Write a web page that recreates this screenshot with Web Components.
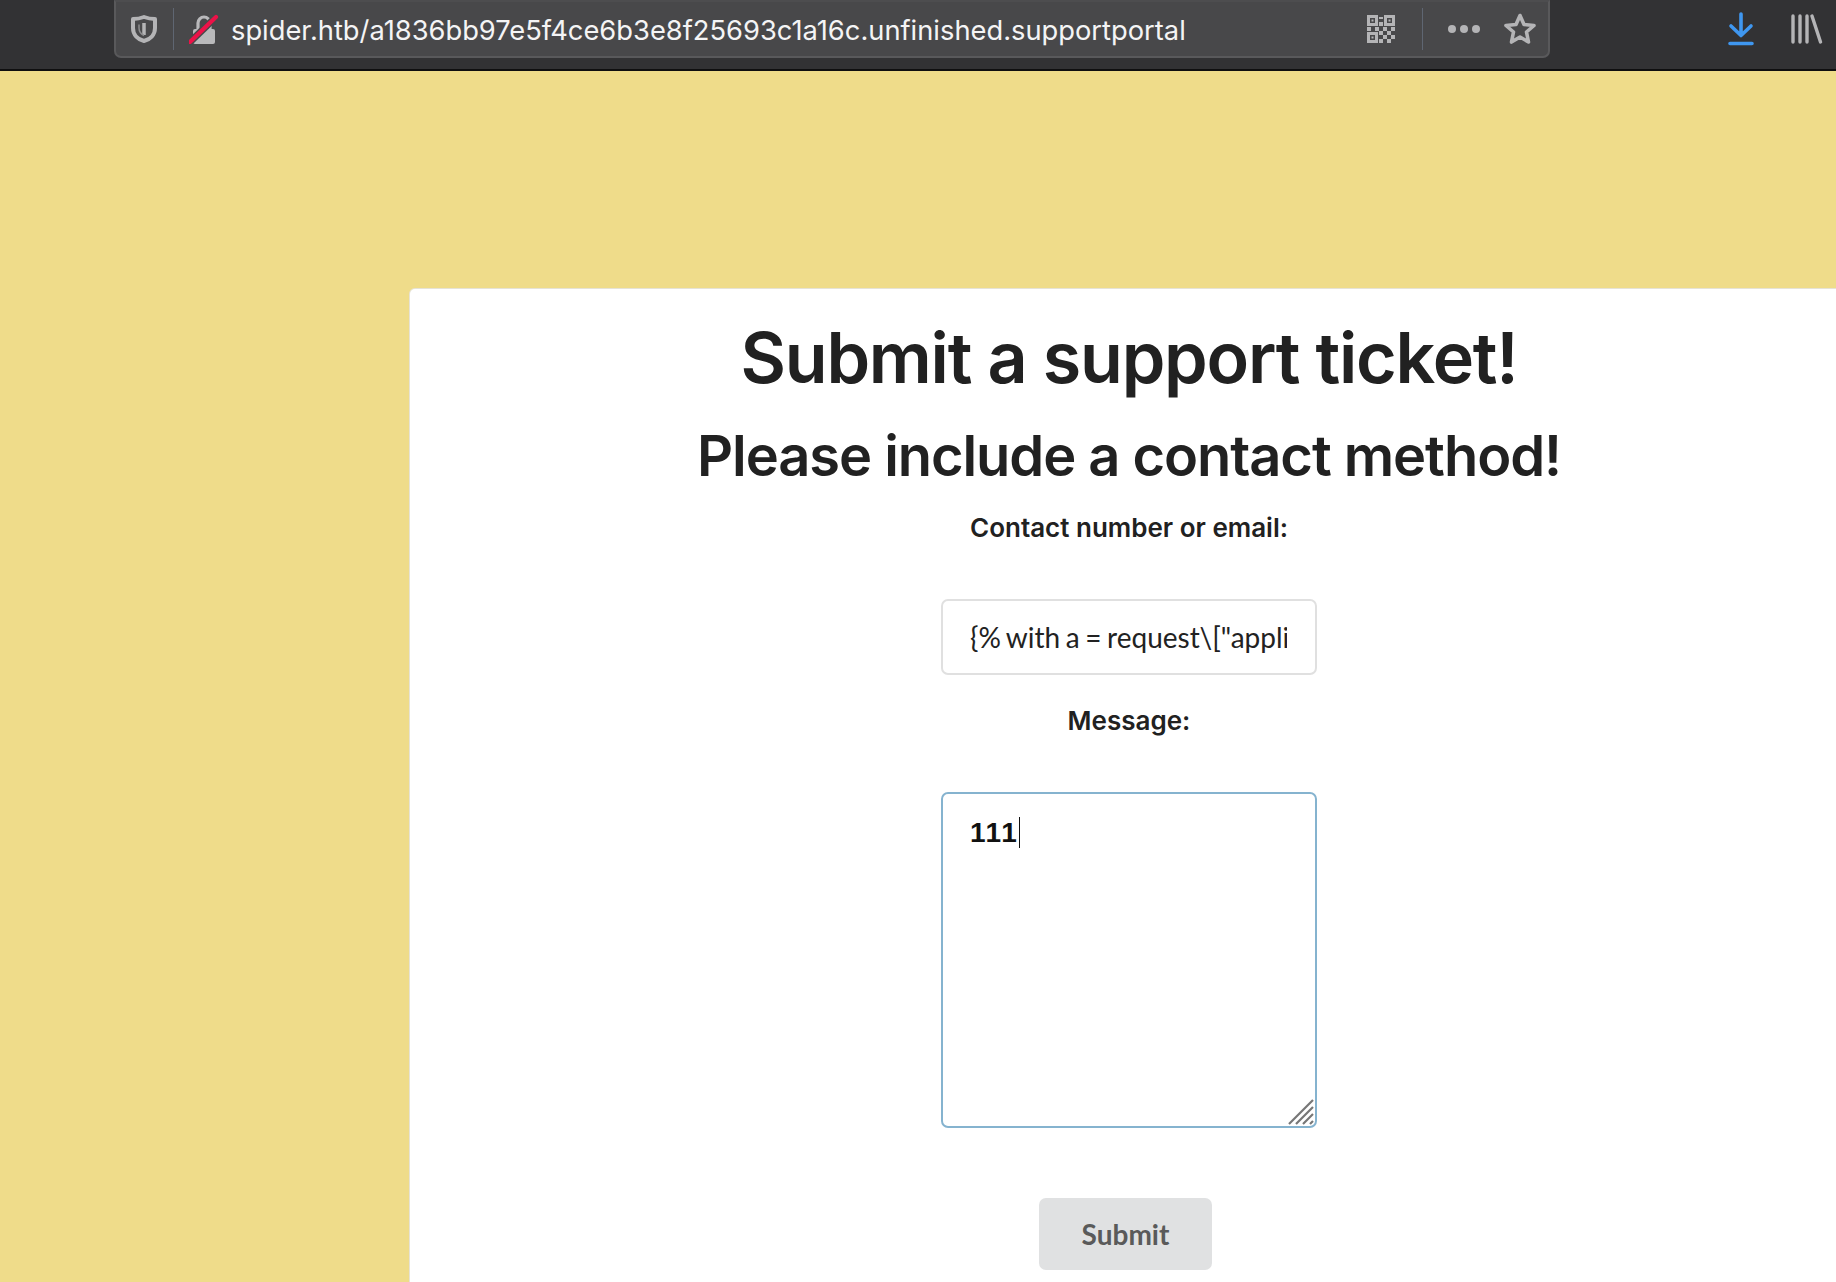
<!DOCTYPE html>
<html>
<head>
<meta charset="utf-8">
<title>Support portal</title>
<style>
  html, body { margin: 0; height: 100%; overflow: hidden; background: #efdc8a; }
</style>
</head>
<body>
<browser-toolbar url="spider.htb/a1836bb97e5f4ce6b3e8f25693c1a16c.unfinished.supportportal"></browser-toolbar>
<ticket-page>
  <ticket-card>
    <h-title level="1">Submit a support ticket!</h-title>
    <h-title level="2">Please include a contact method!</h-title>
    <form-label>Contact number or email:</form-label>
    <text-field>{% with a = request\["application"\]\["\x5f\x5fglobals\x5f\x5f"\] %}</text-field>
    <form-label class="second">Message:</form-label>
    <message-box>111</message-box>
    <submit-button>Submit</submit-button>
  </ticket-card>
</ticket-page>
<script>
class BrowserToolbar extends HTMLElement {
  constructor() {
    super()
    this.attachShadow({ mode: "open" })
  }
  connectedCallback() {
    this.shadowRoot.innerHTML = /*html */`
      <style>
        :host { display: flex; height: 69px; background: #323234; border-bottom: 2px solid #0f0f10; padding-left: 114px; font-family: Inter, "Liberation Sans", sans-serif; }
        .bar { display: flex; align-items: center; width: 1436px; height: 58px; box-sizing: border-box; background: #48484a; border: 2px solid #59595b; border-top-color: #4d4d4f; border-radius: 0 0 7px 7px; color: #f4f4f5; }
        svg { display: block; flex: none; }
        .sep { flex: none; width: 1px; height: 42px; background: #5f6672; }
        .url { flex: none; width: 1130px; margin-left: 12px; padding-top: 2px; font-size: 27.3px; white-space: nowrap; }
        .right { display: flex; align-items: center; margin-left: auto; }
      </style>
      <div class="bar">
        <svg style="margin-left:15px" width="26" height="28" viewBox="0 0 26 28"><path d="M13 2 C9 3.500 6 4 2 4 V13 C2 20 7 24.500 13 26 C19 24.500 24 20 24 13 V4 C20 4 17 3.500 13 2Z" fill="none" stroke="#b4b4b6" stroke-width="4" stroke-linejoin="round"/><path d="M13 8 V20" stroke="#b4b4b6" stroke-width="3.500"/><path d="M8 9.500 V13 C8 16.500 10 19 13 20.500" fill="none" stroke="#8d8d8f" stroke-width="1.500"/></svg>
        <div class="sep" style="margin-left:16px"></div>
        <svg style="margin-left:15px" width="30" height="30" viewBox="0 0 30 30">
          <path d="M9 16 V9 a6 6 0 0 1 12 0 V16" fill="none" stroke="#b9b9bb" stroke-width="3.200"/>
          <rect x="4" y="15" width="22" height="15" rx="2" fill="#b9b9bb"/>
          <path d="M1 28 L27 3" stroke="#48484a" stroke-width="7"/>
          <path d="M1 28 L27 3" stroke="#ec1248" stroke-width="4.200" stroke-linecap="round"/>
        </svg>
        <div class="url">${this.getAttribute("url")}</div>
        <div class="right">
          <svg width="30" height="30" viewBox="0 0 30 30" fill="#b4b4b6">
            <path fill-rule="evenodd" d="M1 1h11v11H1z M4 4v5h5V4z M18 1h11v11H18z M21 4v5h5V4z M1 18h11v11H1z M4 21v5h5v-5z"/>
            <rect x="5.500" y="5.500" width="2" height="2"/><rect x="22.500" y="5.500" width="2" height="2"/><rect x="5.500" y="22.500" width="2" height="2"/>
            <path d="M13 3h4v2h-4z M13 8h4v4h-4z M1 13h4v4H1z M9 13h4v4H9z M17 13h4v4h-4z M25 13h4v4h-4z M13 17h4v4h-4z M21 17h4v4h-4z M17 21h4v4h-4z M25 21h4v4h-4z M13 25h4v4h-4z M21 25h4v4h-4z"/>
          </svg>
          <div class="sep" style="margin-left:26px"></div>
          <svg style="margin-left:24px" width="34" height="10" viewBox="0 0 34 10" fill="#b4b4b6"><circle cx="5" cy="5" r="4"/><circle cx="17" cy="5" r="4"/><circle cx="29" cy="5" r="4"/></svg>
          <svg style="margin-left:22px;margin-right:11px" width="34" height="34" viewBox="0 0 34 34"><path d="M17 3.500 L21 12.500 L31 13.500 L23.500 20 L25.500 30 L17 25 L8.500 30 L10.500 20 L3 13.500 L13 12.500Z" fill="none" stroke="#b4b4b6" stroke-width="3.600" stroke-linejoin="round"/></svg>
        </div>
      </div>
      <svg style="margin-left:177px;margin-top:12px" width="28" height="34" viewBox="0 0 28 34" fill="none" stroke="#3f97f0" stroke-width="3.600" stroke-linecap="round" stroke-linejoin="round"><path d="M14 2 V23 M4 14 L14 23.500 L24 14 M3 31.500 H25"/></svg>
      <svg style="margin-left:36px;margin-top:14px" width="32" height="30" viewBox="0 0 32 30" fill="none" stroke="#b4b4b6" stroke-width="3.400" stroke-linecap="round"><path d="M2 2 V28 M9 2 V28 M16 2 V28 M21 2 L29.500 28"/></svg>
    `
  }
}

class TicketPage extends HTMLElement {
  constructor() {
    super()
    this.attachShadow({ mode: "open" })
    this.shadowRoot.innerHTML = /*html */`
      <style>
        :host { display: block; height: 1211px; padding: 218px 0 0 410px; box-sizing: border-box; overflow: hidden; background: #efdc8a; }
      </style>
      <slot></slot>
    `
  }
}

class TicketCard extends HTMLElement {
  constructor() {
    super()
    this.attachShadow({ mode: "open" })
    this.shadowRoot.innerHTML = /*html */`
      <style>
        :host { display: flex; flex-direction: column; align-items: center; width: 1438px; height: 1100px; box-sizing: border-box; padding-top: 22px; background: #fff; border-radius: 5px 0 0 0; box-shadow: 0 0 0 1px #e6e3d6; color: #212121; font-family: Inter, "Liberation Sans", Arial, sans-serif; }
      </style>
      <slot></slot>
    `
  }
}

class HTitle extends HTMLElement {
  constructor() {
    super()
    this.attachShadow({ mode: "open" })
    const level = this.getAttribute("level")
    this.shadowRoot.innerHTML = /*html */`
      <style>
        :host { display: block; font-weight: 600; white-space: nowrap; }
        :host([level="1"]) { font-size: 70px; line-height: 94px; letter-spacing: -1.25px; }
        :host([level="2"]) { font-size: 56px; line-height: 70px; margin-top: 16px; letter-spacing: -1.06px; }
      </style>
      <slot></slot>
    `
    this.setAttribute("role", "heading")
    this.setAttribute("aria-level", level)
  }
}

class FormLabel extends HTMLElement {
  constructor() {
    super()
    this.attachShadow({ mode: "open" })
    this.shadowRoot.innerHTML = /*html */`
      <style>
        :host { display: block; font-size: 26px; font-weight: 600; line-height: 36px; margin-top: 19px; }
        :host(.second) { margin-top: 28px; }
      </style>
      <slot></slot>
    `
  }
}

class TextField extends HTMLElement {
  constructor() {
    super()
    this.attachShadow({ mode: "open" })
    this.shadowRoot.innerHTML = /*html */`
      <style>
        :host { display: block; width: 376px; height: 76px; box-sizing: border-box; margin-top: 53px; padding: 1px 28px 0 27px; background: #fff; border: 2px solid #e0e0e0; border-radius: 7px; font: 28px/71px Lato, sans-serif; word-spacing: -1.6px; color: #222; }
        .clip { overflow: hidden; white-space: nowrap; }
      </style>
      <div class="clip"><slot></slot></div>
    `
  }
}

class MessageBox extends HTMLElement {
  constructor() {
    super()
    this.attachShadow({ mode: "open" })
    this.shadowRoot.innerHTML = /*html */`
      <style>
        :host { display: block; position: relative; width: 376px; height: 336px; box-sizing: border-box; margin-top: 53px; padding: 21px 27px; background: #fff; border: 2px solid #85b3cf; border-radius: 7px; font: 700 28px/36px "Liberation Sans", Arial, sans-serif; font-kerning: none; color: #111; }
        .caret { display: inline-block; width: 1.500px; height: 31px; background: #111; vertical-align: -6px; margin-left: 2px; }
        svg { position: absolute; right: 1px; bottom: 1px; }
      </style>
      <slot></slot><span class="caret"></span>
      <svg width="26" height="26" viewBox="0 0 26 26" stroke="#777" stroke-width="2.200" fill="none"><path d="M1 25 L25 1 M8 25 L25 8 M15 25 L25 15 M22 25 L25 22"/></svg>
    `
  }
}

class SubmitButton extends HTMLElement {
  constructor() {
    super()
    this.attachShadow({ mode: "open" })
    this.shadowRoot.innerHTML = /*html */`
      <style>
        :host { display: block; width: 173px; height: 72px; margin: 70px 7px 0 0; background: #e0e1e2; border-radius: 7px; color: #5a5a5a; font: 700 28px/72px Lato, sans-serif; text-align: center; }
      </style>
      <slot></slot>
    `
  }
}

customElements.define("browser-toolbar", BrowserToolbar)
customElements.define("ticket-page", TicketPage)
customElements.define("ticket-card", TicketCard)
customElements.define("h-title", HTitle)
customElements.define("form-label", FormLabel)
customElements.define("text-field", TextField)
customElements.define("message-box", MessageBox)
customElements.define("submit-button", SubmitButton)
</script>
</body>
</html>
